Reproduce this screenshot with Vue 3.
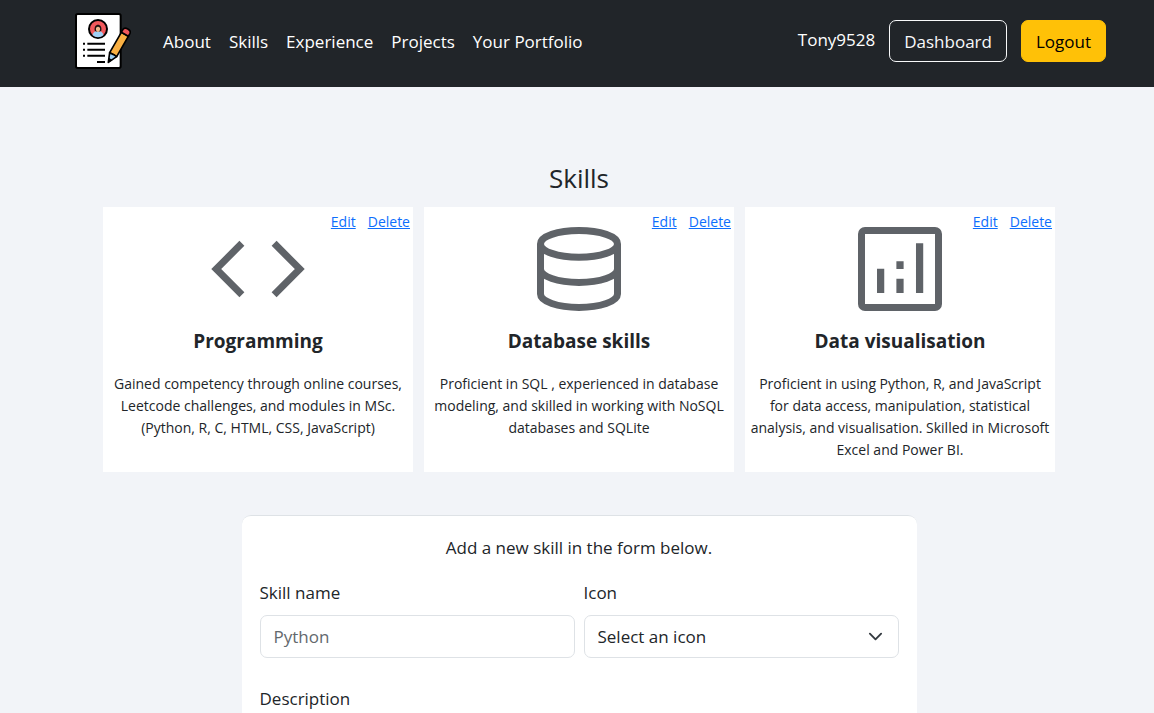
<script setup>
import { ref } from 'vue'

const links = ['About', 'Skills', 'Experience', 'Projects', 'Your Portfolio']

const skills = [
  {
    name: 'Programming',
    icon: 'code',
    text: ['Gained competency through online courses,', 'Leetcode challenges, and modules in MSc.', '(Python, R, C, HTML, CSS, JavaScript)'],
  },
  {
    name: 'Database skills',
    icon: 'database',
    text: ['Proficient in SQL , experienced in database', 'modeling, and skilled in working with NoSQL', 'databases and SQLite'],
  },
  {
    name: 'Data visualisation',
    icon: 'chart',
    text: ['Proficient in using Python, R, and JavaScript', 'for data access, manipulation, statistical', 'analysis, and visualisation. Skilled in Microsoft', 'Excel and Power BI.'],
  },
]

const skillName = ref('')
const description = ref('')
</script>

<template>
  <div class="page">
    <header class="navbar">
      <a href="#" class="brand" aria-label="Home">
        <svg class="logo" viewBox="45 39 168 168" aria-hidden="true">
          <rect x="48" y="42" width="134" height="162" rx="5" fill="#fff" stroke="#000" stroke-width="6" />
          <circle cx="114" cy="87" r="27" fill="#f1595c" stroke="#000" stroke-width="6" />
          <path d="M98 106c0-9 8-13 16-13s16 4 16 13c-9 8-23 8-32 0z" fill="#9fd0f5" />
          <path d="M104 92c-4-24 24-24 20 0-5 4-15 4-20 0z" fill="#1c1210" />
          <path d="M108 84c3-5 9-5 12 0 1 5-1 8-2 10-2 3-6 3-8 0-1-2-3-5-2-10z" fill="#f0b98d" />
          <path d="M82 131h53M82 149h53M82 167h53M111 186h24" stroke="#000" stroke-width="6" fill="none" />
          <path d="M69 131h6M69 149h6M69 167h6" stroke="#000" stroke-width="6" fill="none" />
          <path d="M149 158l35-61 21 12-35 61-9-6z" fill="#f9b043" stroke="#000" stroke-width="5" stroke-linejoin="round" />
          <path d="M184 97l5-9c6-9 26 2 21 12l-5 9z" fill="#f1595c" stroke="#000" stroke-width="5" stroke-linejoin="round" />
          <path d="M149 158l-4 29 25-17-9-6z" fill="#9fd0f5" stroke="#000" stroke-width="5" stroke-linejoin="round" />
          <path d="M144 189l3-16 10 8z" fill="#000" />
        </svg>
      </a>
      <nav class="links">
        <a v-for="link in links" :key="link" href="#">{{ link }}</a>
      </nav>
      <div class="account">
        <span class="user">Tony9528</span>
        <button type="button" class="btn outline">Dashboard</button>
        <button type="button" class="btn warning">Logout</button>
      </div>
    </header>

    <main>
      <h1>Skills</h1>
      <section class="cards">
        <article v-for="skill in skills" :key="skill.name" class="card">
          <div class="actions">
            <a href="#">Edit</a>
            <a href="#">Delete</a>
          </div>
          <svg class="icon" viewBox="0 0 960 960" fill="none" stroke="#5f6368" stroke-width="60" aria-hidden="true">
            <path v-if="skill.icon === 'code'" d="M342 260 122 480l220 220M618 260l220 220-220 220" />
            <template v-else-if="skill.icon === 'database'">
              <ellipse cx="480" cy="265" rx="330" ry="115" />
              <path d="M150 265V695A330 115 0 0 0 810 695V265M150 480A330 115 0 0 0 810 480" />
            </template>
            <g v-else fill="#5f6368" stroke="none">
              <path fill-rule="evenodd" d="M180 120H780a60 60 0 0 1 60 60V780a60 60 0 0 1-60 60H180a60 60 0 0 1-60-60V180a60 60 0 0 1 60-60zM180 180V780H780V180z" />
              <path d="M283 477h62v209h-62zM449 563h62v123h-62zM449 414h62v66h-62zM617 260h62v426h-62z" />
            </g>
          </svg>
          <h2>{{ skill.name }}</h2>
          <p>
            <template v-for="(line, i) in skill.text" :key="i"><br v-if="i" />{{ line }}</template>
          </p>
        </article>
      </section>

      <form class="form" @submit.prevent>
        <p class="intro">Add a new skill in the form below.</p>
        <div class="row">
          <div class="field">
            <label for="skill-name">Skill name</label>
            <input id="skill-name" v-model="skillName" type="text" placeholder="Python" />
          </div>
          <div class="field">
            <label for="skill-icon">Icon</label>
            <div class="select">
              <select id="skill-icon">
                <option>Select an icon</option>
              </select>
              <svg class="chevron" viewBox="0 0 16 16" aria-hidden="true">
                <path d="m2 5 6 6 6-6" fill="none" stroke="#343a40" stroke-width="2" stroke-linecap="round" stroke-linejoin="round" />
              </svg>
            </div>
          </div>
        </div>
        <div class="field">
          <label for="skill-description">Description</label>
          <textarea id="skill-description" v-model="description" rows="3"></textarea>
        </div>
      </form>
    </main>
  </div>
</template>

<style>
body {
  margin: 0;
  background: #f2f4f8;
}
</style>

<style scoped>
* {
  box-sizing: border-box;
}

.page {
  height: 100vh;
  overflow: hidden auto;
  scrollbar-width: none;
  background: #f2f4f8;
  color: #212529;
  font-family: "Segoe UI", "Open Sans", "Noto Sans", sans-serif;
  font-size: 17px;
  line-height: 27px;
}

.navbar {
  display: flex;
  align-items: center;
  padding: 13px 48px 18px 75px;
  background: #212529;
}

.brand,
.logo {
  display: block;
  width: 56px;
  height: 56px;
}

.links {
  display: flex;
  gap: 18px;
  margin-left: 32px;
}

.links a {
  color: #fff;
  text-decoration: none;
  white-space: nowrap;
}

.account {
  display: flex;
  align-items: center;
  gap: 14px;
  margin-left: auto;
  color: #fff;
}

.user {
  padding-bottom: 4px;
}

.btn {
  height: 42px;
  padding: 0 14px;
  border: 1px solid #f8f9fa;
  border-radius: 7px;
  background: transparent;
  color: #f8f9fa;
  font: inherit;
}

.btn.warning {
  border-color: #ffc107;
  background: #ffc107;
  color: #000;
}

main {
  padding: 75px 99px 48px 103px;
}

h1 {
  margin: 0 0 13px;
  font-size: 26px;
  font-weight: 400;
  line-height: 32px;
  text-align: center;
}

.cards {
  display: grid;
  grid-template-columns: repeat(3, 1fr);
  gap: 11px;
}

.card {
  position: relative;
  padding: 6px 4px 11px;
  background: #fff;
  text-align: center;
}

.actions {
  position: absolute;
  top: 4px;
  right: 3px;
  display: flex;
  gap: 12px;
  font-size: 14px;
  line-height: 22px;
}

.actions a {
  color: #0d6efd;
}

.icon {
  display: block;
  width: 112px;
  height: 112px;
  margin: 0 auto;
}

h2 {
  margin: 3px 0 18px;
  font-size: 19px;
  font-weight: 700;
  line-height: 27px;
}

.card p {
  margin: 0;
  font-size: 14px;
  line-height: 22px;
  white-space: nowrap;
}

.form {
  max-width: 675px;
  margin: 43px auto 0;
  padding: 18px;
  border-top: 1px solid #dee2e6;
  border-radius: 9px;
  background: #fff;
}

.intro {
  margin: 0 0 18px;
  text-align: center;
}

.row {
  display: flex;
  gap: 9px;
  margin-bottom: 27px;
}

.field {
  flex: 1;
  min-width: 0;
}

label {
  display: block;
  margin-bottom: 9px;
}

input,
select,
textarea {
  display: block;
  width: 100%;
  height: 43px;
  padding: 0 13px;
  border: 1px solid #dee2e6;
  border-radius: 7px;
  background: #fff;
  color: #212529;
  font: inherit;
}

textarea {
  height: auto;
  padding: 8px 13px;
}

input::placeholder {
  color: #63686d;
  opacity: 1;
}

.select {
  position: relative;
}

select {
  appearance: none;
}

.chevron {
  position: absolute;
  top: 14px;
  right: 16px;
  width: 15px;
  height: 15px;
  pointer-events: none;
}
</style>
